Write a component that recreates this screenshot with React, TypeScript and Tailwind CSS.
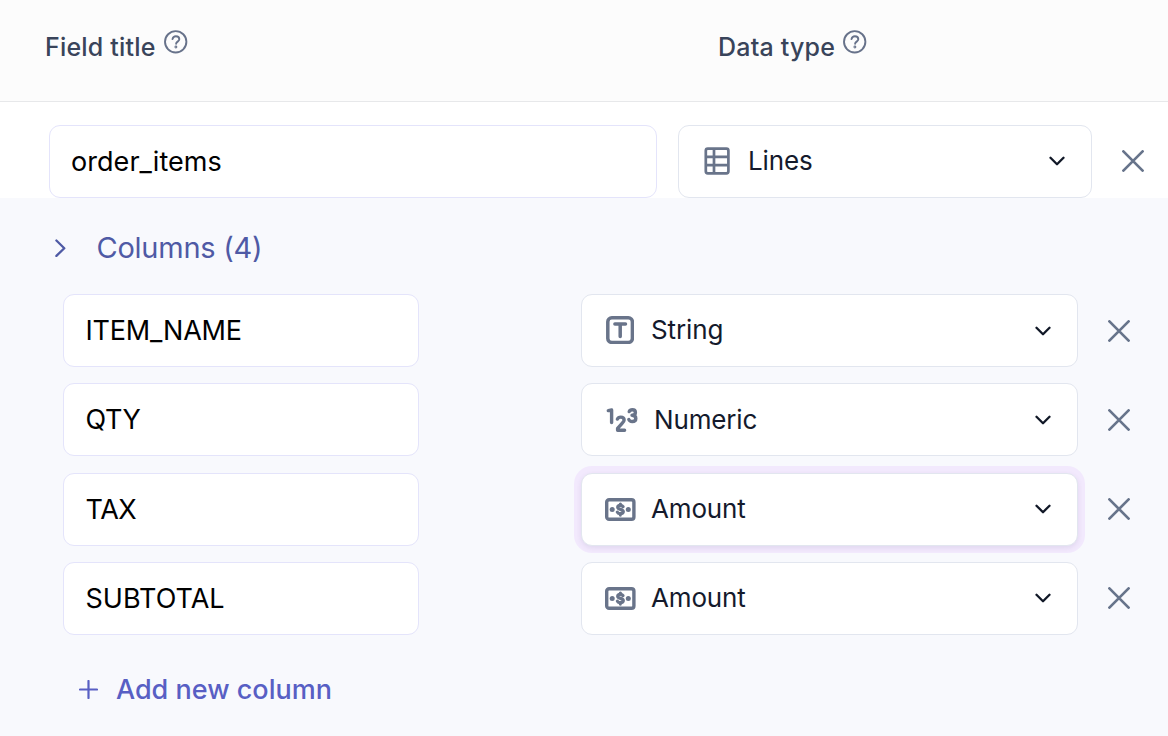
import type { ReactNode } from "react";

function HelpIcon() {
  return (
    <svg className="h-6 w-6 shrink-0 text-[#67728a]" viewBox="0 0 24 24" fill="none" stroke="currentColor" strokeWidth="1.9" strokeLinecap="round" strokeLinejoin="round">
      <circle cx="11.7" cy="11.8" r="10.7" />
      <path d="M8.5 9.1c.4-1.8 1.7-2.9 3.4-2.9 1.9 0 3.4 1.3 3.4 3 0 2.2-3.2 2.6-3.2 4.5" />
      <circle cx="11.9" cy="17" r="0.5" />
    </svg>
  );
}

function TableIcon() {
  return (
    <svg className="h-7 w-[26px]" viewBox="0 0 26 28" fill="none" stroke="currentColor" strokeWidth="2.7" strokeLinejoin="round">
      <rect x="1.8" y="1.7" width="22.6" height="24.6" rx="2" />
      <path d="M10 2v24M2 9.9h22M2 18.1h22" />
    </svg>
  );
}

function TextIcon() {
  return (
    <svg className="mb-px h-7 w-7" viewBox="0 0 28 28" fill="none" stroke="currentColor" strokeWidth="3.5" strokeLinecap="round" strokeLinejoin="round">
      <rect x="1.8" y="1.8" width="24.6" height="24.6" rx="4" />
      <path d="M8.9 7.9h10.6M14.2 7.9v12.7" />
    </svg>
  );
}

function NumbersIcon() {
  return (
    <svg className="mt-px h-6 w-8" viewBox="0 0 32 24" fill="none" stroke="currentColor" strokeWidth="3.4" strokeLinecap="round" strokeLinejoin="round">
      <path d="M2.3 2.6 5.6 2v12.5" />
      <path d="M11.4 11.1c.5-1.2 1.6-2 3.3-2 2 0 3.4 1.1 3.4 2.8 0 1.4-.8 2.2-2 3.4l-4.5 5v1.9h7" />
      <path d="M23.2 3.6c.5-1.1 1.6-1.8 3.1-1.8 1.8 0 3.1 1 3.1 2.6s-1.2 2.8-3.4 2.8c2.4 0 3.8 1.2 3.8 3.2 0 1.9-1.5 3.1-3.6 3.1-1.7 0-2.9-.7-3.4-2" />
    </svg>
  );
}

function MoneyIcon() {
  return (
    <svg className="h-[23px] w-[31px]" viewBox="0 0 31 23" fill="none" stroke="currentColor" strokeLinecap="round" strokeLinejoin="round">
      <rect x="1.7" y="1.7" width="27.2" height="19.6" rx="2.4" strokeWidth="3.4" />
      <path d="M18 8.6c-.5-.8-1.5-1.2-2.7-1.2-1.6 0-2.6.7-2.6 1.9 0 2.7 5.6 1.5 5.6 4.3 0 1.2-1.2 2-2.9 2-1.5 0-2.5-.5-3-1.4M15.4 6v1.4M15.4 15.8v1.3" strokeWidth="3.2" />
      <circle cx="7.2" cy="11.5" r="2.5" fill="currentColor" stroke="none" />
      <circle cx="23.3" cy="11.5" r="2.5" fill="currentColor" stroke="none" />
    </svg>
  );
}

function ChevronDown() {
  return (
    <svg className="h-[10px] w-4 text-[#111827]" viewBox="0 0 16 10" fill="none" stroke="currentColor" strokeWidth="2.3" strokeLinecap="round" strokeLinejoin="round">
      <path d="M1.5 1.7 8 8.2l6.5-6.5" />
    </svg>
  );
}

function RemoveButton() {
  return (
    <button type="button" aria-label="Remove" className="text-[#67748b]">
      <svg className="h-[22px] w-[22px]" viewBox="0 0 22 22" fill="none" stroke="currentColor" strokeWidth="2.7" strokeLinecap="round">
        <path d="m1.4 1.4 19.2 19.2M20.6 1.4 1.4 20.6" />
      </svg>
    </button>
  );
}

function NameField({ value, className }: { value: string; className: string }) {
  return (
    <div className={`flex h-[73px] items-center rounded-[11px] border border-[#e4e4fb] bg-white text-[27px] text-black ${className}`}>
      {value}
    </div>
  );
}

function TypeSelect({ icon, label, className, labelStyle = "" }: { icon: ReactNode; label: string; className: string; labelStyle?: string }) {
  return (
    <div className={`flex h-[73px] items-center rounded-[11px] border border-[#e2e6ef] bg-white pr-[26px] text-[26px] text-[#141a2c] ${className}`}>
      <span className="text-[#69748a]">{icon}</span>
      <span className={`grow ${labelStyle}`}>{label}</span>
      <ChevronDown />
    </div>
  );
}

const columns = [
  { name: "ITEM_NAME", type: "String", icon: <TextIcon />, fieldStyle: "pt-0.5 tracking-[-0.2px]", selectStyle: "gap-[17px] pl-6", labelStyle: "pb-[3px] tracking-[-0.1px]" },
  { name: "QTY", type: "Numeric", icon: <NumbersIcon />, fieldStyle: "tracking-[-0.4px]", selectStyle: "gap-4 pl-6", labelStyle: "tracking-[-0.15px]" },
  { name: "TAX", type: "Amount", icon: <MoneyIcon />, fieldStyle: "pt-0.5 tracking-[-0.5px]", selectStyle: "gap-[15px] pl-[23px] shadow-[0_2px_5px_0_rgba(80,60,120,0.1),0_0_0_7px_#f2e9fd]", labelStyle: "pb-px tracking-[-0.15px]" },
  { name: "SUBTOTAL", type: "Amount", icon: <MoneyIcon />, fieldStyle: "pt-0.5", selectStyle: "gap-[15px] pl-[23px]", labelStyle: "pb-px tracking-[-0.15px]" },
];

export default function App() {
  return (
    <div className="flex h-[736px] w-[1168px] flex-col overflow-hidden bg-white font-['Inter',sans-serif]">
      <header className="flex h-[102px] shrink-0 border-b border-[#e7e8ea] bg-[#fcfcfc] pt-[30px] pl-[45px] text-[25px] leading-[34px] font-medium tracking-[0.2px] text-[#39445a]">
        <div className="flex w-[673px] gap-2">
          <span>Field title</span>
          <HelpIcon />
        </div>
        <div className="flex gap-2">
          <span>Data type</span>
          <HelpIcon />
        </div>
      </header>

      <div className="flex h-24 shrink-0 items-end pl-[49px]">
        <NameField value="order_items" className="mr-[21px] w-[608px] pt-0.5 pl-[21px] tracking-[0.05px]" />
        <TypeSelect icon={<TableIcon />} label="Lines" className="w-[414px] gap-[18px] pb-px pl-[25px]" labelStyle="pb-0.5 tracking-[-0.1px]" />
        <div className="flex h-[73px] items-center pb-px pl-[30px]">
          <RemoveButton />
        </div>
      </div>

      <section className="grow bg-[#f8f9fd]">
        <div className="flex h-24 items-center pt-1 pl-[54px] text-[29px] tracking-[-0.25px] text-[#4f5aa5]">
          <svg className="h-[18px] w-3" viewBox="0 0 12 18" fill="none" stroke="currentColor" strokeWidth="2.3" strokeLinecap="round" strokeLinejoin="round">
            <path d="m2.4 1.5 7.9 7.7-7.9 7.7" />
          </svg>
          <span className="pl-[30.5px]">Columns (4)</span>
        </div>
        <div className="flex flex-col gap-[16.33px] pl-[63px]">
          {columns.map((column) => (
            <div key={column.name} className="flex items-center">
              <NameField value={column.name} className={`mr-[162px] w-[356px] pl-[21.5px] ${column.fieldStyle}`} />
              <TypeSelect
                icon={column.icon}
                label={column.type}
                className={`w-[497px] ${column.selectStyle}`}
                labelStyle={column.labelStyle}
              />
              <div className="flex pl-[30px]">
                <RemoveButton />
              </div>
            </div>
          ))}
        </div>
        <button type="button" className="mt-9 flex items-center pl-[79px] text-[27px] leading-[38px] font-medium text-[#585fc4]">
          <svg className="h-[19px] w-[19px]" viewBox="0 0 19 19" fill="none" stroke="currentColor" strokeWidth="2.2" strokeLinecap="round">
            <path d="M9.5 1v17M1 9.5h17" />
          </svg>
          <span className="pl-[18px]">Add new column</span>
        </button>
      </section>
    </div>
  );
}
